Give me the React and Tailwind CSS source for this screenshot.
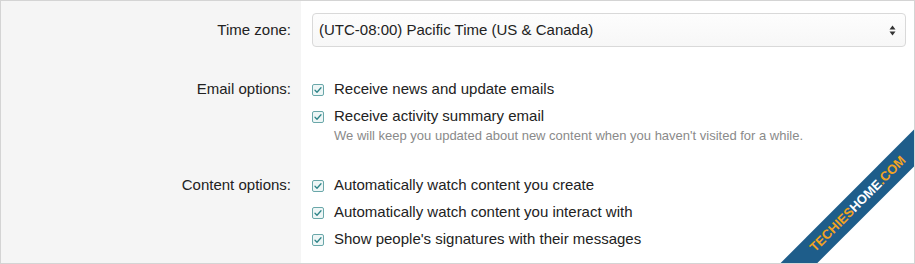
const Check = () => (
  <svg width="12" height="12" viewBox="0 0 12 12" className="shrink-0">
    <rect x="0.5" y="0.5" width="11" height="11" rx="1.5" fill="#eef6f6" stroke="#6aa7a9" />
    <path d="M3 6.2 L5 8.2 L9 3.8" fill="none" stroke="#2f8589" strokeWidth="1.3" strokeLinecap="round" strokeLinejoin="round" />
  </svg>
);

const CheckRow = ({ children }) => (
  <div className="flex h-[27px] items-center gap-[10px]">
    <Check />
    <span>{children}</span>
  </div>
);

export default function App() {
  return (
    <div
      className="relative h-[264px] w-[915px] overflow-hidden border border-[#d4d4d4] bg-[linear-gradient(to_right,#f5f5f5_300px,#ffffff_300px)] text-[15px] text-[#222]"
      style={{ fontFamily: '"Liberation Sans", Arial, sans-serif' }}
    >
      {/* time zone */}
      <div className="flex pt-[12px]">
        <div className="flex h-[34px] w-[300px] items-center justify-end pr-[10px]">Time zone:</div>
        <div className="flex-1 pl-[11px] pr-[8px]">
          <div className="flex h-[34px] items-center justify-between rounded-[4px] border border-[#d9d9d9] bg-[linear-gradient(#fdfdfd,#f7f7f7)] pl-[6px] pr-[9px]">
            <span>(UTC-08:00) Pacific Time (US &amp; Canada)</span>
            <svg width="7" height="11" viewBox="0 0 7 11">
              <path d="M3.5 0.5 L6.5 4.5 L0.5 4.5 Z M3.5 10.5 L6.5 6.5 L0.5 6.5 Z" fill="#333" />
            </svg>
          </div>
        </div>
      </div>

      {/* email */}
      <div className="flex pt-[29px]">
        <div className="flex h-[27px] w-[300px] items-center justify-end pr-[10px]">Email options:</div>
        <div className="flex-1 pl-[11px]">
          <CheckRow>Receive news and update emails</CheckRow>
          <CheckRow>Receive activity summary email</CheckRow>
          <p className="-mt-[2px] pl-[22px] text-[13px] leading-[16px] text-[#8a8a8a]">
            We will keep you updated about new content when you haven't visited for a while.
          </p>
        </div>
      </div>

      {/* content */}
      <div className="flex pt-[28px]">
        <div className="flex h-[27px] w-[300px] items-center justify-end pr-[10px]">Content options:</div>
        <div className="flex-1 pl-[11px]">
          <CheckRow>Automatically watch content you create</CheckRow>
          <CheckRow>Automatically watch content you interact with</CheckRow>
          <CheckRow>Show people's signatures with their messages</CheckRow>
        </div>
      </div>

      {/* watermark ribbon */}
      <div className="absolute left-[726px] top-[190px] flex h-[26px] w-[262px] -rotate-45 items-center justify-center bg-[#1e5d8a] text-[13px] font-bold">
        <span className="text-[#f2a31f]">TECHIES</span>
        <span className="text-white">HOME</span>
        <span className="text-[#f2a31f]">.COM</span>
      </div>
    </div>
  );
}
